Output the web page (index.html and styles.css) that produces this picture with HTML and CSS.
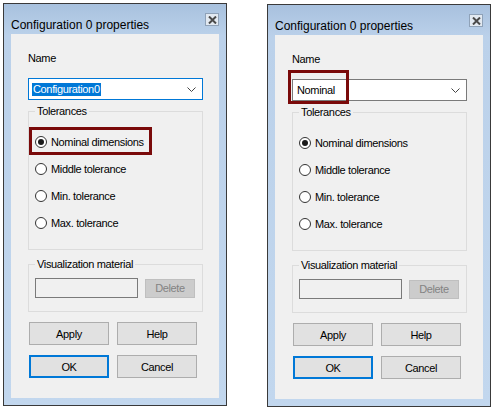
FILE: index.html
```html
<!DOCTYPE html>
<html lang="en">
<head>
    <meta charset="UTF-8">
    <meta name="viewport" content="width=device-width, initial-scale=1.0">
    <title>Configuration 0 properties</title>
    <link rel="stylesheet" href="styles.css">
</head>
<body>

    <div class="page">

        <!-- Dialog: name being edited -->
        <div class="dialog">
            <div class="titlebar">
                <span class="title">Configuration 0 properties</span>
                <span class="close">
                    <svg width="9" height="8" viewBox="0 0 9 8"><path d="M1 0.5 L8 7.5 M8 0.5 L1 7.5" stroke="#4a4a4a" stroke-width="2"/></svg>
                </span>
            </div>
            <div class="client">
                <div class="label">Name</div>
                <div class="combo focused">
                    <span class="value selected">Configuration0</span>
                    <svg class="chevron" width="9" height="5" viewBox="0 0 9 5"><path d="M0.5 0.5 L4.5 4.5 L8.5 0.5" fill="none" stroke="#444" stroke-width="1"/></svg>
                </div>

                <fieldset class="group tolerances">
                    <legend>Tolerances</legend>
                    <label class="radio"><span class="dot checked"></span>Nominal dimensions</label>
                    <label class="radio"><span class="dot"></span>Middle tolerance</label>
                    <label class="radio"><span class="dot"></span>Min. tolerance</label>
                    <label class="radio"><span class="dot"></span>Max. tolerance</label>
                </fieldset>

                <fieldset class="group material">
                    <legend>Visualization material</legend>
                    <div class="material-row">
                        <span class="textbox"></span>
                        <button class="btn small disabled">Delete</button>
                    </div>
                </fieldset>

                <div class="button-row">
                    <button class="btn">Apply</button>
                    <button class="btn">Help</button>
                </div>
                <div class="button-row">
                    <button class="btn default">OK</button>
                    <button class="btn">Cancel</button>
                </div>

                <!-- Red highlight -->
                <div class="mark mark-radio"></div>
            </div>
        </div>

        <!-- Dialog: name set to Nominal -->
        <div class="dialog second">
            <div class="titlebar">
                <span class="title">Configuration 0 properties</span>
                <span class="close">
                    <svg width="9" height="8" viewBox="0 0 9 8"><path d="M1 0.5 L8 7.5 M8 0.5 L1 7.5" stroke="#4a4a4a" stroke-width="2"/></svg>
                </span>
            </div>
            <div class="client">
                <div class="label">Name</div>
                <div class="combo">
                    <span class="value">Nominal</span>
                    <svg class="chevron" width="9" height="5" viewBox="0 0 9 5"><path d="M0.5 0.5 L4.5 4.5 L8.5 0.5" fill="none" stroke="#444" stroke-width="1"/></svg>
                </div>

                <fieldset class="group tolerances">
                    <legend>Tolerances</legend>
                    <label class="radio"><span class="dot checked"></span>Nominal dimensions</label>
                    <label class="radio"><span class="dot"></span>Middle tolerance</label>
                    <label class="radio"><span class="dot"></span>Min. tolerance</label>
                    <label class="radio"><span class="dot"></span>Max. tolerance</label>
                </fieldset>

                <fieldset class="group material">
                    <legend>Visualization material</legend>
                    <div class="material-row">
                        <span class="textbox"></span>
                        <button class="btn small disabled">Delete</button>
                    </div>
                </fieldset>

                <div class="button-row">
                    <button class="btn">Apply</button>
                    <button class="btn">Help</button>
                </div>
                <div class="button-row">
                    <button class="btn default">OK</button>
                    <button class="btn">Cancel</button>
                </div>

                <!-- Red highlight -->
                <div class="mark mark-combo"></div>
            </div>
        </div>

    </div>

</body>
</html>
```

FILE: styles.css
```css
body {
    margin: 0;
    background: #ffffff;
    font-family: "Liberation Sans", Arial, sans-serif;
    color: #000;
}

.page {
    display: flex;
    align-items: flex-start;
    gap: 40px;
    padding: 3px 0 0 3px;
}

/* Window frame */
.dialog {
    width: 224px;
    box-sizing: border-box;
    border: 1px solid #3a3a3a;
    padding: 0 7px 7px;
    background: linear-gradient(#a8c1de, #bbd1ea 32px, #c2d7ee);
}

.dialog.second {
    margin-top: 1px;
}

.titlebar {
    height: 30px;
    display: flex;
    justify-content: space-between;
    align-items: flex-start;
}

.title {
    font-size: 12px;
    line-height: 14px;
    margin-top: 14px;
    color: #000;
}

.close {
    margin-top: 9px;
    width: 14px;
    height: 13px;
    box-sizing: border-box;
    border: 1px solid #8fa2b8;
    background: #e2e9f1;
    display: flex;
    align-items: center;
    justify-content: center;
}

/* Client area */
.client {
    position: relative;
    height: 364px;
    box-sizing: border-box;
    background: #f0f0f0;
    padding: 17px 16px 0 17px;
    font-size: 11px;
    letter-spacing: -0.35px;
}

.label {
    line-height: 14px;
}

.combo {
    margin-top: 13px;
    height: 22px;
    box-sizing: border-box;
    border: 1px solid #7a7a7a;
    background: #fff;
    display: flex;
    align-items: center;
    justify-content: space-between;
    padding: 0 6px 0 3px;
}

.combo.focused {
    border-color: #0078d7;
}

.value {
    line-height: 13px;
    padding: 0 1px;
}

.value.selected {
    background: #0078d7;
    color: #fff;
}

/* Group boxes */
.group {
    margin: 0;
    border: 1px solid #dcdcdc;
    padding: 0 6px;
    min-width: 0;
}

.group legend {
    padding: 0 2px;
    line-height: 14px;
}

.tolerances {
    margin-top: 4px;
    padding-top: 10px;
    padding-bottom: 13px;
}

.radio {
    display: flex;
    align-items: center;
    gap: 4px;
    height: 27px;
}

.dot {
    width: 12px;
    height: 12px;
    box-sizing: border-box;
    border: 1px solid #333;
    border-radius: 50%;
    background: #fff;
    display: flex;
    align-items: center;
    justify-content: center;
}

.dot.checked::after {
    content: "";
    width: 6px;
    height: 6px;
    border-radius: 50%;
    background: #1a1a1a;
}

.material {
    margin-top: 7px;
    padding-top: 7px;
    padding-bottom: 13px;
}

.material-row {
    display: flex;
    align-items: center;
    gap: 7px;
}

.textbox {
    width: 103px;
    height: 20px;
    box-sizing: border-box;
    border: 1px solid #7a7a7a;
    background: #f0f0f0;
}

/* Buttons */
.btn {
    font-family: inherit;
    font-size: 11px;
    letter-spacing: -0.35px;
    color: #000;
    width: 80px;
    height: 23px;
    box-sizing: border-box;
    border: 1px solid #adadad;
    background: #e1e1e1;
    padding: 0;
}

.btn.small {
    width: 50px;
    height: 19px;
}

.btn.disabled {
    background: #cccccc;
    border-color: #bfbfbf;
    color: #838383;
}

.btn.default {
    border: 2px solid #0078d7;
}

.button-row {
    display: flex;
    gap: 8px;
    margin-top: 10px;
    padding-left: 1px;
}

/* Red annotation boxes */
.mark {
    position: absolute;
    border: 3px solid #7a0a0a;
    box-sizing: border-box;
}

.mark-radio {
    left: 18px;
    top: 93px;
    width: 123px;
    height: 28px;
}

.mark-combo {
    left: 13px;
    top: 35px;
    width: 61px;
    height: 34px;
}
```
